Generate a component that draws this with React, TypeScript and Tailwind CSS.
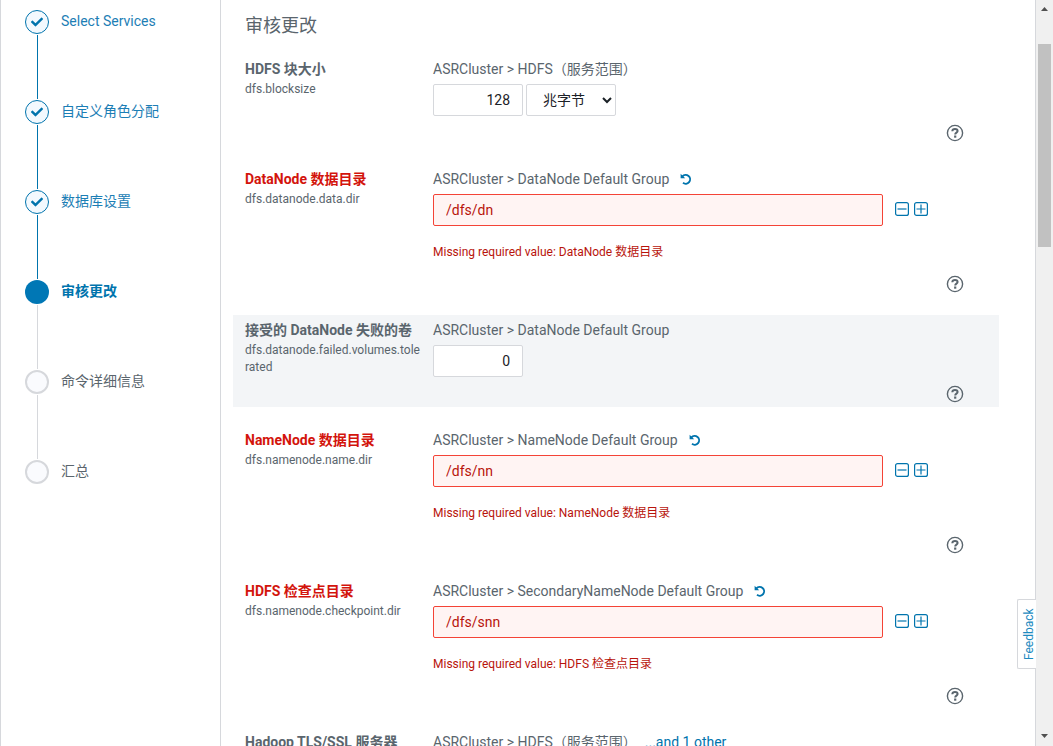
import { useState } from "react";
import { FaCheck } from "react-icons/fa";

type StepState = "done" | "current" | "todo";

const steps: { label: string; state: StepState }[] = [
  { label: "Select Services", state: "done" },
  { label: "自定义角色分配", state: "done" },
  { label: "数据库设置", state: "done" },
  { label: "审核更改", state: "current" },
  { label: "命令详细信息", state: "todo" },
  { label: "汇总", state: "todo" },
];

type Setting = {
  name: string;
  prop: string;
  scope: string;
  kind: "size" | "path" | "number";
  value: string;
  others?: string;
  shaded?: boolean;
};

const settings: Setting[] = [
  { name: "HDFS 块大小", prop: "dfs.blocksize", scope: "ASRCluster > HDFS（服务范围）", kind: "size", value: "128" },
  { name: "DataNode 数据目录", prop: "dfs.datanode.data.dir", scope: "ASRCluster > DataNode Default Group", kind: "path", value: "/dfs/dn" },
  { name: "接受的 DataNode 失败的卷", prop: "dfs.datanode.failed.volumes.tolerated", scope: "ASRCluster > DataNode Default Group", kind: "number", value: "0", shaded: true },
  { name: "NameNode 数据目录", prop: "dfs.namenode.name.dir", scope: "ASRCluster > NameNode Default Group", kind: "path", value: "/dfs/nn" },
  { name: "HDFS 检查点目录", prop: "dfs.namenode.checkpoint.dir", scope: "ASRCluster > SecondaryNameNode Default Group", kind: "path", value: "/dfs/snn" },
  { name: "Hadoop TLS/SSL 服务器", prop: "ssl.server.keystore.location", scope: "ASRCluster > HDFS（服务范围）", kind: "path", value: "", others: "...and 1 other" },
];

const dotClass: Record<StepState, string> = {
  done: "border border-[#0074ad] bg-[#f3f9fe] text-[#0074ad]",
  current: "bg-[#0077b5]",
  todo: "border-2 border-[#d6d8dc] bg-[#fafbfe]",
};

const labelClass: Record<StepState, string> = {
  done: "text-[#1c7eb5]",
  current: "font-bold text-[#0074ad]",
  todo: "text-[#5a656d]",
};

function UndoIcon() {
  return (
    <svg width="12" height="12" viewBox="0 0 12 12" fill="none" aria-hidden="true">
      <path d="M2.4 3.4A4.4 4.4 0 1 1 3 9.8" stroke="currentColor" strokeWidth="1.9" />
      <path d="M0.6 0.8V5.2H5.2Z" fill="currentColor" />
    </svg>
  );
}

function SquareIcon({ plus }: { plus?: boolean }) {
  return (
    <svg width="14" height="14" viewBox="0 0 14 14" fill="none" stroke="currentColor" aria-hidden="true">
      <rect x="0.6" y="0.6" width="12.8" height="12.8" rx="2" strokeWidth="1.2" />
      <path d={plus ? "M2.5 7H11.5M7 2.5V11.5" : "M2.5 7H11.5"} strokeWidth="1.2" />
    </svg>
  );
}

function HelpIcon() {
  return (
    <svg width="18" height="18" viewBox="0 0 18 18" fill="none" aria-hidden="true">
      <circle cx="9" cy="9" r="7.6" stroke="currentColor" strokeWidth="1.4" />
      <path d="M6.3 7.3C6.4 5.7 7.6 5 9 5C10.6 5 11.6 5.9 11.6 7C11.6 8.7 9.2 8.6 9.2 10.5" stroke="currentColor" strokeWidth="2" />
      <rect x="8.1" y="11.5" width="2.2" height="2.2" fill="currentColor" />
    </svg>
  );
}

function Sidebar() {
  return (
    <nav aria-label="Steps" className="w-[221px] shrink-0 border-x border-[#d6d8dc] pt-[10px] pl-6">
      <ol>
        {steps.map(({ label, state }, i) => (
          <li key={label}>
            <div className="flex items-start gap-3">
              <span className={`flex size-6 items-center justify-center rounded-full ${dotClass[state]}`}>
                {state === "done" && <FaCheck size={12} />}
              </span>
              <a href="#" className={`leading-[22px] ${labelClass[state]}`}>
                {label}
              </a>
            </div>
            {i < steps.length - 1 && (
              <div className={`my-px ml-3 h-16 w-px ${i < 3 ? "bg-[#0074ad]" : "bg-[#d6d8dc]"}`} />
            )}
          </li>
        ))}
      </ol>
    </nav>
  );
}

const fieldClass = "h-8 rounded-xs border px-3 outline-none";
const plainField = "border-[#d6d8dc] bg-white text-[#1b2127]";

function Field({ setting }: { setting: Setting }) {
  const [value, setValue] = useState(setting.value);
  const [unit, setUnit] = useState("MiB");

  if (setting.kind === "path") {
    return (
      <div className="flex items-center">
        <input
          id={setting.prop}
          aria-invalid="true"
          value={value}
          onChange={(e) => setValue(e.target.value)}
          className={`${fieldClass} w-[450px] border-[#f44336] bg-[#fff4f3] text-[#b8140c]`}
        />
        <div className="ml-3 flex gap-[5px] pb-[2px] text-[#0074ad]">
          <button type="button" aria-label="Remove">
            <SquareIcon />
          </button>
          <button type="button" aria-label="Add">
            <SquareIcon plus />
          </button>
        </div>
      </div>
    );
  }

  return (
    <div className="flex gap-[3px]">
      <input
        id={setting.prop}
        value={value}
        onChange={(e) => setValue(e.target.value)}
        className={`${fieldClass} ${plainField} w-[90px] text-right`}
      />
      {setting.kind === "size" && (
        <select
          aria-label="Unit"
          value={unit}
          onChange={(e) => setUnit(e.target.value)}
          className={`${fieldClass} ${plainField} w-[90px]`}
        >
          <option value="KiB">千字节</option>
          <option value="MiB">兆字节</option>
          <option value="GiB">吉字节</option>
        </select>
      )}
    </div>
  );
}

function SettingRow({ setting }: { setting: Setting }) {
  const invalid = setting.kind === "path" && !setting.others;
  return (
    <div className={`flex pt-1 pr-[35px] pb-1 pl-3 ${setting.shaded ? "bg-[#f3f5f7]" : ""}`}>
      <div className="mr-3 w-[176px] shrink-0">
        <label
          htmlFor={setting.prop}
          className={`block leading-[22px] font-bold ${invalid ? "text-[#d3140c]" : ""}`}
        >
          {setting.name}
        </label>
        <div className="mt-px text-xs leading-[17px] break-all">{setting.prop}</div>
      </div>
      <div className="min-w-0 grow">
        <div className="mb-1 flex items-center leading-[22px]">
          <span>{setting.scope}</span>
          {invalid && (
            <button type="button" aria-label="Reset" className="ml-[11px] text-[#0074ad]">
              <UndoIcon />
            </button>
          )}
          {setting.others && (
            <a href="#" className="ml-2 text-[#0074ad]">
              {setting.others}
            </a>
          )}
        </div>
        <Field setting={setting} />
        {invalid && (
          <p className="pt-4 pb-[5px] text-xs leading-5 text-[#b8140c]">
            Missing required value: {setting.name}
          </p>
        )}
        <div className="mt-2 flex justify-end">
          <button type="button" aria-label="Help">
            <HelpIcon />
          </button>
        </div>
      </div>
    </div>
  );
}

function ScrollTrack() {
  return (
    <div className="flex w-[18px] shrink-0 flex-col items-center border-l border-[#d6d8dc] bg-[#f0f0f0] text-[#505050]">
      <svg width="7" height="4" viewBox="0 0 7 4" className="mt-[7px]" aria-hidden="true">
        <path d="M3.5 0L7 4H0Z" fill="currentColor" />
      </svg>
      <div className="mt-[33px] h-[203px] w-[13px] bg-[#c1c1c1]" />
      <svg width="7" height="4" viewBox="0 0 7 4" className="mt-auto mb-2" aria-hidden="true">
        <path d="M0 0H7L3.5 4Z" fill="currentColor" />
      </svg>
    </div>
  );
}

export default function App() {
  return (
    <div className="relative flex h-screen overflow-hidden bg-white font-[Roboto,'Noto_Sans_CJK_SC',sans-serif] text-sm text-[#5a656d]">
      <Sidebar />
      <main className="min-w-0 grow overflow-hidden pt-3 pr-9 pl-3">
        <h1 className="mb-[14px] pl-3 text-lg leading-7">审核更改</h1>
        <div className="flex flex-col gap-[18px]">
          {settings.map((s) => (
            <SettingRow key={s.prop} setting={s} />
          ))}
        </div>
      </main>
      <ScrollTrack />
      <button
        type="button"
        className="absolute right-[17px] bottom-[77px] h-[70px] w-[19px] rotate-180 rounded-r-xs border border-l-0 border-[#d6d8dc] bg-white pr-[3px] text-center text-xs leading-4 text-[#1c8ac0] [writing-mode:vertical-rl]"
      >
        Feedback
      </button>
    </div>
  );
}
